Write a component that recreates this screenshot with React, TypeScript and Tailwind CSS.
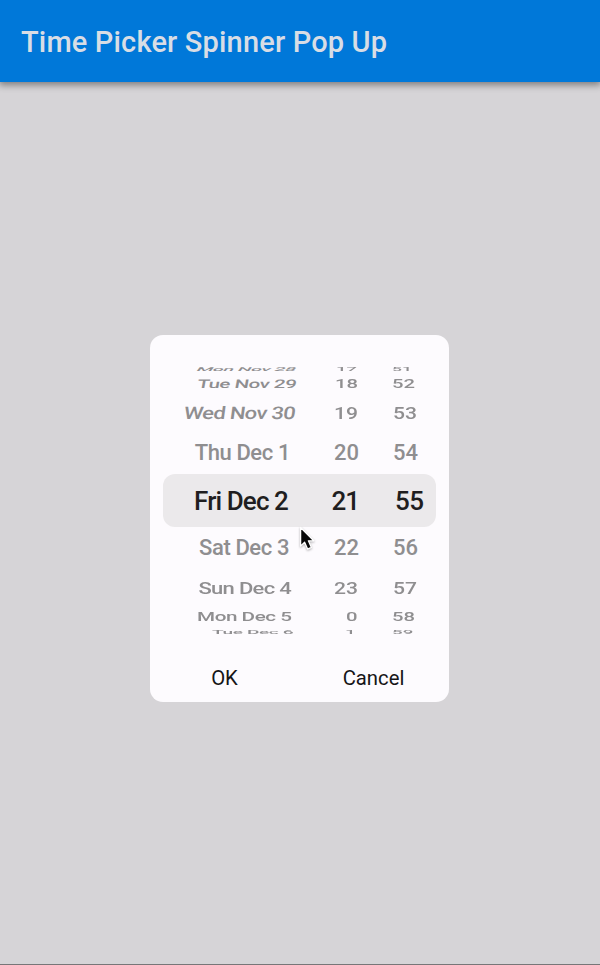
type Row = {
  date: string;
  hour: string;
  minute: string;
  row: string;
  dateClass: string;
  hourClass: string;
  minuteClass: string;
};

const faded = "text-[22px] text-[#8f8e90]";

const rows: Row[] = [
  { date: "Mon Nov 28", hour: "17", minute: "51", row: `h-[15px] ${faded}`, dateClass: "mr-[3px] tracking-[-0.5px] scale-y-[.24] -skew-x-12 scale-x-[.87]", hourClass: "mr-[2px] scale-y-[.24] scale-x-[.84]", minuteClass: "scale-y-[.24] scale-x-[.8]" },
  { date: "Tue Nov 29", hour: "18", minute: "52", row: `h-4 ${faded}`, dateClass: "mr-[3px] tracking-[-0.5px] scale-y-[.54] -skew-x-6 scale-x-[.93]", hourClass: "mr-px scale-y-[.54] scale-x-[.92]", minuteClass: "scale-y-[.54] scale-x-[.92]" },
  { date: "Wed Nov 30", hour: "19", minute: "53", row: `h-10 pt-px ${faded}`, dateClass: "mr-[4px] tracking-[-0.7px] scale-y-[.79] -skew-x-6", hourClass: "mr-px scale-y-[.79] scale-x-[.96]", minuteClass: "ml-px scale-y-[.79] scale-x-[.96]" },
  { date: "Thu Dec 1", hour: "20", minute: "54", row: `h-[42px] ${faded}`, dateClass: "mr-[9px] tracking-[-0.4px]", hourClass: "", minuteClass: "ml-px" },
  { date: "Fri Dec 2", hour: "21", minute: "55", row: "h-[53px] text-[26px] text-[#1f1e20]", dateClass: "mr-[11px] tracking-[-0.9px]", hourClass: "tracking-[-1px]", minuteClass: "ml-[3px] tracking-[-0.5px]" },
  { date: "Sat Dec 3", hour: "22", minute: "56", row: `h-10 pt-px ${faded}`, dateClass: "mr-[10px] tracking-[-0.4px]", hourClass: "", minuteClass: "ml-px" },
  { date: "Sun Dec 4", hour: "23", minute: "57", row: `h-[41px] ${faded}`, dateClass: "mr-[8px] tracking-[-0.7px] scale-y-[.79]", hourClass: "mr-px scale-y-[.79] scale-x-[.96]", minuteClass: "ml-px scale-y-[.79] scale-x-[.96]" },
  { date: "Mon Dec 5", hour: "0", minute: "58", row: `h-[17px] ${faded}`, dateClass: "mr-[7px] tracking-[-0.5px] scale-y-[.54] scale-x-[.94]", hourClass: "mr-px scale-y-[.54] scale-x-[.92]", minuteClass: "scale-y-[.54] scale-x-[.92]" },
  { date: "Tue Dec 6", hour: "1", minute: "59", row: `h-[14px] ${faded}`, dateClass: "mr-[6px] tracking-[-0.5px] scale-y-[.22] scale-x-[.87]", hourClass: "mr-[3px] scale-y-[.22] scale-x-[.85]", minuteClass: "scale-y-[.22] scale-x-[.85]" },
];

function WheelRow({ item }: { item: Row }) {
  return (
    <div className={`flex items-center whitespace-nowrap font-medium leading-none ${item.row}`}>
      <div className="flex w-[136px] justify-end">
        <span className={`origin-right ${item.dateClass}`}>{item.date}</span>
      </div>
      <div className="flex w-[60px] justify-end">
        <span className={`origin-right ${item.hourClass}`}>{item.hour}</span>
      </div>
      <div className="ml-[33px] flex">
        <span className={`origin-left ${item.minuteClass}`}>{item.minute}</span>
      </div>
    </div>
  );
}

export default function App() {
  return (
    <main className="relative flex h-[965px] w-[600px] flex-col overflow-hidden border-b border-[#777678] bg-[#d6d4d7] font-[Roboto,sans-serif]">
      <header className="flex h-[82px] shrink-0 items-center bg-[#0078d9] pl-[21px] pt-[3px] shadow-[0_2px_7px_1px_rgba(0,0,0,0.42)]">
        <h1 className="whitespace-nowrap text-[29px] font-medium leading-none tracking-[0.16px] text-[#d8dde5]">Time Picker Spinner Pop Up</h1>
      </header>
      <section className="ml-[150px] mt-[253px] h-[367px] w-[299px] rounded-[13px] bg-[#fdfbfe] px-[13px] pt-[26px]">
        <div className="flex flex-col">
          {rows.map((item) => (
            <div key={item.date} className={item.hour === "21" ? "rounded-[12px] bg-[#ebe9eb]" : ""}>
              <WheelRow item={item} />
            </div>
          ))}
        </div>
        <div className="-mx-[13px] mt-[19px] grid grid-cols-2 pr-px text-[20.3px] leading-[41px] text-[#161517]">
          <button className="text-center">OK</button>
          <button className="text-center">Cancel</button>
        </div>
      </section>
      <svg className="absolute left-[298px] top-[526px] drop-shadow-[0_1px_1px_rgba(0,0,0,0.3)]" width="18" height="27" viewBox="0 0 18 27">
        <path d="M2.6 1.5v18.6l4-3.8 3 6.8 3.8-1.7-3-6.6h5.4z" fill="#080808" stroke="#fff" strokeWidth="1.3" strokeLinejoin="round" />
      </svg>
    </main>
  );
}
